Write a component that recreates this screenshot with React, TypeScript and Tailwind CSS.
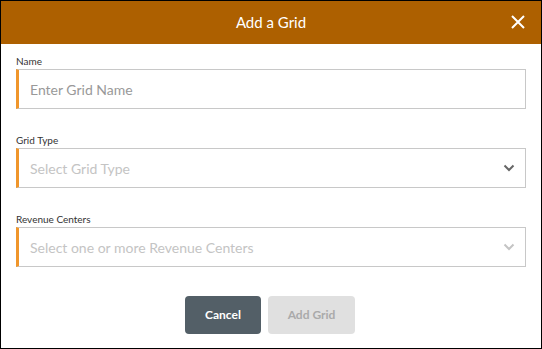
import React from "react";

function Chevron({ color }: { color: string }) {
  return (
    <svg width="12" height="8" viewBox="0 0 12 8" fill="none">
      <path d="M1.5 1.5 L6 6 L10.5 1.5" stroke={color} strokeWidth="2" />
    </svg>
  );
}

export default function App() {
  return (
    <div
      className="w-[542px] h-[349px] bg-white border border-black flex flex-col overflow-hidden"
      style={{ fontFamily: "Lato, 'Open Sans', sans-serif" }}
    >
      <div className="h-[43px] bg-[#ad6000] relative flex items-center justify-center shrink-0">
        <span className="text-white text-[15px]">Add a Grid</span>
        <button className="absolute right-[14px] top-[12px] text-white">
          <svg width="18" height="18" viewBox="0 0 18 18">
            <path d="M3 3 L15 15 M15 3 L3 15" stroke="white" strokeWidth="2" />
          </svg>
        </button>
      </div>
      <div className="px-[15px] pt-[10px] flex flex-col">
        <div className="text-[10px] text-[#333] font-normal h-[15px] leading-[15px]">Name</div>
        <div className="h-[40px] border border-[#c8c8c8] border-l-[3px] border-l-[#f0962b] flex items-center pl-[11px] text-[14px] text-[#999]">
          Enter Grid Name
        </div>
        <div className="mt-[24px] text-[10px] text-[#333] font-normal h-[15px] leading-[15px]">Grid Type</div>
        <div className="h-[40px] border border-[#c8c8c8] border-l-[3px] border-l-[#f0962b] flex items-center justify-between pl-[11px] pr-[10px] text-[14px] text-[#c4c4c4]">
          <span>Select Grid Type</span>
          <Chevron color="#666" />
        </div>
        <div className="mt-[24px] text-[10px] text-[#333] font-normal h-[15px] leading-[15px]">Revenue Centers</div>
        <div className="h-[40px] border border-[#c8c8c8] border-l-[3px] border-l-[#f0962b] flex items-center justify-between pl-[11px] pr-[10px] text-[14px] text-[#c4c4c4]">
          <span>Select one or more Revenue Centers</span>
          <Chevron color="#c4c4c4" />
        </div>
        <div className="mt-[29px] flex justify-center gap-[7px] pr-[2px]">
          <button className="w-[76px] h-[38px] rounded-[4px] bg-[#535f67] text-white text-[12px] font-bold">Cancel</button>
          <button className="w-[87px] h-[38px] rounded-[4px] bg-[#e0e0e0] text-[#aaa] text-[12px] font-bold">Add Grid</button>
        </div>
      </div>
    </div>
  );
}
